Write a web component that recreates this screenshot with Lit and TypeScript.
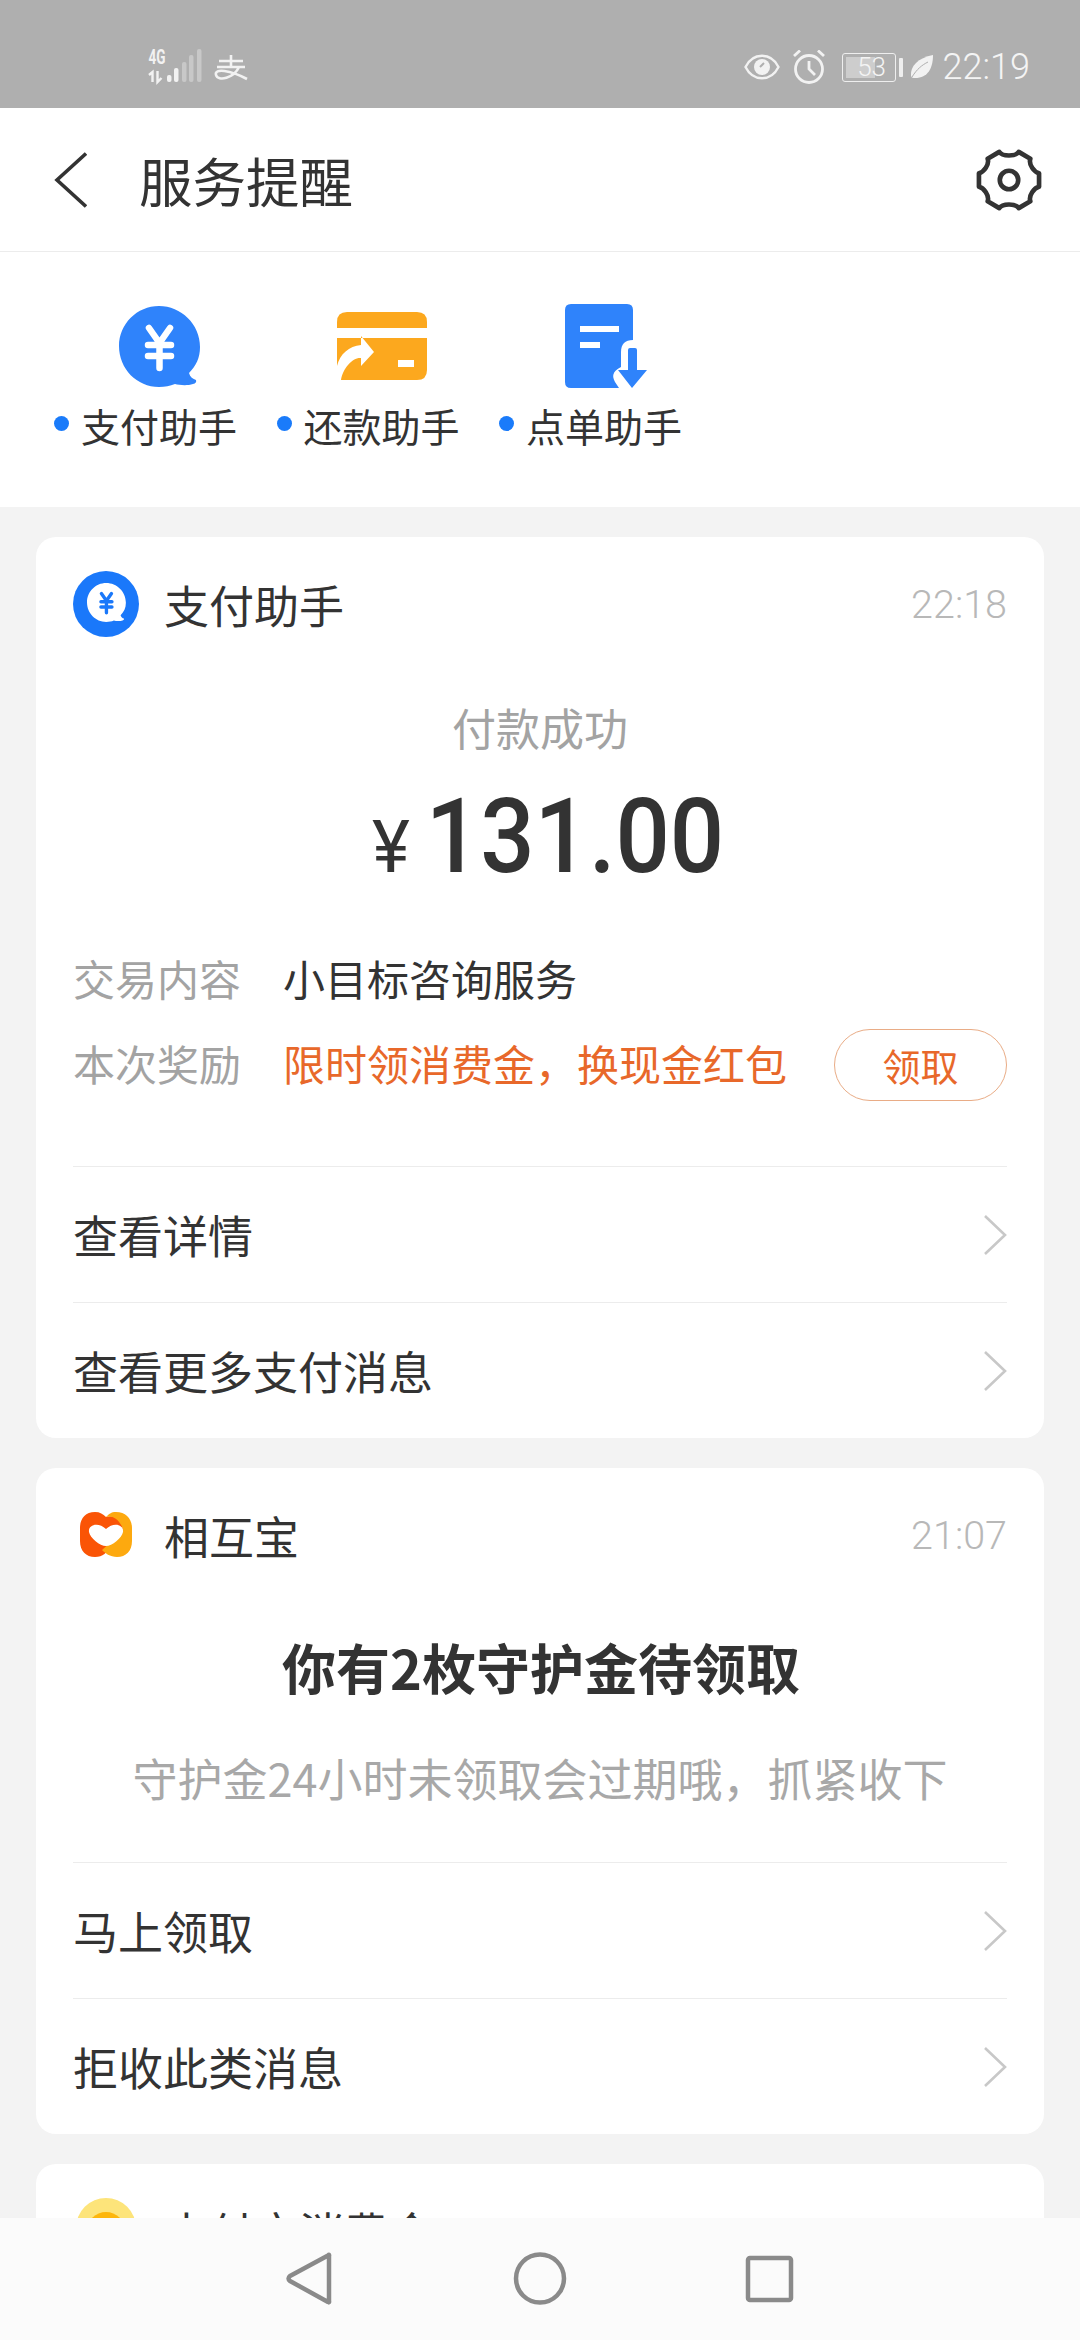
import { LitElement, html, css, svg } from "lit";
import { customElement } from "lit/decorators.js";

const chevron = html`<svg class="chev" viewBox="0 0 24 40" width="24" height="40"><path d="M2 1 L22 20 L2 39" fill="none" stroke="#c8c8c8" stroke-width="2.600"/></svg>`;

const yuanBubble = (bg: string, fg: string, sw: number) => svg`
  <path d="M40 0 C62 0 81 18 81 41 C81 52 77 60 70 67 C71 71 74 73 77 74 Q78 77 74 78 C68 80 60 79 56 78 C51 80 46 81 40 81 C18 81 0 63 0 40 C0 18 18 0 40 0Z" fill="${bg}"/>
  <path d="M30 22 L40.500 37 L51 22 M29 39 H52 M29 50 H52 M40.500 37 V62" fill="none" stroke="${fg}" stroke-width="${sw}" stroke-linecap="round" stroke-linejoin="round"/>`;

@customElement("app-root")
export class AppRoot extends LitElement {
  static styles = css`
    :host {
      display: block;
      width: 1080px;
      height: 2340px;
      overflow: hidden;
      position: relative;
      background: #f3f3f3;
      font-family: "Noto Sans CJK SC", "Noto Sans", sans-serif;
      color: #333;
    }
    .status {
      height: 108px;
      background: #afafaf;
      display: flex;
      align-items: flex-start;
      justify-content: space-between;
      padding: 0 50px 0 148px;
      box-sizing: border-box;
      color: #f2f2f2;
    }
    .status-left { display: flex; gap: 12px; margin-top: 49px; }
    .status-left svg { overflow: visible; }
    .status-left svg + svg { margin-top: 6px; }
    .status-right { display: flex; align-items: center; margin-top: 48px; height: 38px; }
    .alarm { margin-left: 12px; }
    .clock { font: 300 36px "Roboto", sans-serif; margin-left: 9px; color: #f4f4f4; }
    .batt {
      width: 54px; height: 29px; border: 1.5px solid #eee; border-radius: 3px; box-sizing: border-box;
      position: relative; font: 300 26px/26px "Roboto", sans-serif; text-align: center; color: #f4f4f4;
      margin-left: 16px;
    }
    .batt i { position: absolute; left: 3px; top: 3px; bottom: 3px; width: 29px; background: #cdcdcd; }
    .batt span { position: relative; left: 3px; }
    .nub { width: 4px; height: 19px; background: #eee; border-radius: 1px; margin: 0 7px 0 3px; }
    .head {
      height: 144px;
      background: #fff;
      border-bottom: 1px solid #ececec;
      box-sizing: border-box;
      display: flex;
      align-items: center;
      padding: 0 38px 0 54px;
    }
    .head .back { margin-right: 52px; }
    .head h1 { font-size: 53.500px; font-weight: 400; margin: 0; flex: 1; line-height: 1; color: #333; }
    .short {
      height: 255px;
      background: #fff;
      display: flex;
      padding: 52px 0 0 54px;
      box-sizing: border-box;
    }
    .sitem { width: 222.500px; display: flex; flex-direction: column; align-items: stretch; }
    .sicon { height: 84px; width: 210px; display: flex; justify-content: center; align-items: center; }
    .doc { margin-left: 4px; }
    .slabel { display: flex; align-items: center; margin-top: 11px; font-size: 39px; line-height: 52px; white-space: nowrap; }
    .dot { width: 15px; height: 15px; background: #1a7bfa; border-radius: 50%; margin-right: 12px; position: relative; top: -2px; flex: none; }
    .list { padding: 30px 36px 0; display: flex; flex-direction: column; gap: 30px; }
    .card { background: #fff; border-radius: 20px; padding: 0 37px; }
    .chead { display: flex; align-items: center; height: 134px; box-sizing: border-box; }
    .chead svg { flex: none; }
    .ctitle { font-size: 45px; flex: 1; margin-left: 25px; line-height: 1; white-space: nowrap; }
    .ctime { font: 300 39.500px "Roboto", sans-serif; color: #b8b8b8; }
    .sub { text-align: center; color: #a3a3a3; font-size: 44px; line-height: 60px; margin-top: 26px; }
    .amount {
      display: flex; justify-content: center; align-items: baseline; height: 118px;
      line-height: 118px; font-family: "Roboto", sans-serif; color: #333; margin-top: 21px;
    }
    .amount b { font-weight: 500; font-size: 104px; display: block; transform: scaleX(0.92); width: 294px; white-space: nowrap; text-align: center; margin-left: -6px; }
    .amount span { font-size: 72px; margin-right: 10px; font-weight: 400; }
    .kv { display: flex; align-items: center; font-size: 42px; height: 58px; }
    .kv.first { margin-top: 52px; }
    .kv.gap { margin-top: 20px; height: 72px; }
    .k { color: #a3a3a3; width: 210px; flex: none; }
    .v { flex: 1; white-space: nowrap; }
    .v.hot { color: #e8682a; }
    .btn {
      width: 173px; height: 72px; border: 1px solid #e9ac86; border-radius: 36px; box-sizing: border-box;
      color: #e8682a; font-size: 38px; display: flex; align-items: center; justify-content: center; margin-top: 5px;
    }
    .row { height: 136px; border-top: 1px solid #ececec; display: flex; align-items: center; justify-content: space-between; font-size: 45px; box-sizing: border-box; }
    .spacer-1 { height: 68px; }
    .big { text-align: center; font-size: 54px; font-weight: 700; line-height: 70px; margin-top: 30px; padding-left: 2px; color: #333; white-space: nowrap; }
    .note { text-align: center; color: #a8a8a8; font-size: 45px; line-height: 62px; margin-top: 45px; white-space: nowrap; }
    .spacer-2 { height: 53px; }
    .nav {
      position: absolute; left: 0; right: 0; bottom: 0; height: 122px; background: #fbfbfb;
    }
    .nav svg { display: block; }
  `;

  private gear() {
    return html`<svg width="66" height="64" viewBox="0 0 66 66">
      <path d="M23 4 C26 9 40 9 43 4 L55 11 C53 17 59 25 64 26 L64 40 C59 41 53 49 55 55 L43 62 C40 57 26 57 23 62 L11 55 C13 49 7 41 2 40 L2 26 C7 25 13 17 11 11 Z" fill="none" stroke="#333" stroke-width="4.800" stroke-linejoin="round"/>
      <circle cx="33" cy="33" r="9.500" fill="none" stroke="#333" stroke-width="4.800"/>
    </svg>`;
  }

  render() {
    return html`
      <div class="status">
        <div class="status-left">
          <svg width="54" height="34" viewBox="0 0 54 34">
            <text x="0.500" y="15" font-family="Roboto" font-size="20" font-weight="700" fill="#f2f2f2" textLength="17" lengthAdjust="spacingAndGlyphs">4G</text>
            <path d="M1 26 l3.500 -3 v10 M9.500 22 v11 l4 -4" fill="none" stroke="#f2f2f2" stroke-width="2.400"/>
            <rect x="19" y="26" width="4.500" height="7" rx="2" fill="#f2f2f2"/>
            <rect x="26" y="19" width="4.500" height="14" rx="2" fill="#f2f2f2"/>
            <rect x="34" y="13" width="4.500" height="20" rx="2" fill="#c8c8c8"/>
            <rect x="41" y="6" width="4.500" height="27" rx="2" fill="#c8c8c8"/>
            <rect x="49" y="0" width="4.500" height="33" rx="2" fill="#c8c8c8"/>
          </svg>
          <svg width="34" height="26" viewBox="0 0 34 26">
            <path d="M5 6 H29 M17 0 V12 M3 12 H31 M25 12 C20 23 4 27 2 20 C0 13 16 15 33 24" fill="none" stroke="#f2f2f2" stroke-width="2.600"/>
          </svg>
        </div>
        <div class="status-right">
          <svg width="36" height="28" viewBox="0 0 36 28">
            <path d="M1.500 14 C9 -1 27 -1 34.500 14 C27 29 9 29 1.500 14Z" fill="none" stroke="#f2f2f2" stroke-width="2.400"/>
            <circle cx="18" cy="14" r="8" fill="#f2f2f2"/>
            <path d="M16 14 L20 10" stroke="#afafaf" stroke-width="2"/>
          </svg>
          <svg class="alarm" width="34" height="34" viewBox="0 0 34 34">
            <circle cx="17" cy="19" r="13.500" fill="none" stroke="#f2f2f2" stroke-width="2.800"/>
            <path d="M17 11 V19 L23 25" fill="none" stroke="#f2f2f2" stroke-width="2.800" />
            <path d="M2 6 L8 0.500 M26 0.500 L32 6" stroke="#f2f2f2" stroke-width="2.800"/>
          </svg>
          <div class="batt"><i></i><span>53</span></div>
          <div class="nub"></div>
          <svg width="24" height="26" viewBox="0 0 24 26">
            <path d="M23 1 C23 14 18 24 5 24 C3 24 2 24 1 22 C0 12 8 4 23 1Z" fill="#f2f2f2"/>
            <path d="M2 23 C7 15 12 11 18 8" stroke="#afafaf" stroke-width="1" fill="none"/>
          </svg>
          <div class="clock">22:19</div>
        </div>
      </div>
      <div class="head">
        <svg class="back" width="33" height="56" viewBox="0 0 33 56"><path d="M32 1.500 L3 28 L32 54.500" fill="none" stroke="#333" stroke-width="3.600"/></svg>
        <h1>服务提醒</h1>
        ${this.gear()}
      </div>
      <div class="short">
        <div class="sitem">
          <div class="sicon"><svg width="81" height="81" viewBox="0 0 81 81">${yuanBubble("#2f83fb", "#fff", 6.500)}</svg></div>
          <div class="slabel"><span class="dot"></span>支付助手</div>
        </div>
        <div class="sitem">
          <div class="sicon"><svg width="90" height="68" viewBox="0 0 90 68">
            <path d="M10 0 H80 Q90 0 90 10 V16 H0 V10 Q0 0 10 0Z" fill="#fca81e"/>
            <path d="M0 26 H90 V58 Q90 68 80 68 H4 C6 56 16 45 24 46 V54 L37 40 L24 24 V33 C12 34 3 42 0 54Z" fill="#fca81e"/>
            <rect x="61" y="48" width="16" height="7" fill="#fff"/>
          </svg></div>
          <div class="slabel"><span class="dot"></span>还款助手</div>
        </div>
        <div class="sitem">
          <div class="sicon"><svg class="doc" width="82" height="84" viewBox="0 0 82 84">
            <path d="M6 0 H62 Q68 0 68 6 V36 C60 36 56 40 56 48 V63 C47 68 47 72 50 78 L54 84 H6 Q0 84 0 78 V6 Q0 0 6 0Z" fill="#2f83fb"/>
            <rect x="15" y="22" width="39" height="6" fill="#fff"/>
            <rect x="15" y="38" width="20" height="6" fill="#fff"/>
            <path d="M63 46 Q63 44 65 44 H70 Q72 44 72 46 V66 H82 L67 84 L53 66 H63Z" fill="#2f83fb"/>
          </svg></div>
          <div class="slabel"><span class="dot"></span>点单助手</div>
        </div>
      </div>
      <div class="list">
        <div class="card">
          <div class="chead">
            <svg width="66" height="66" viewBox="0 0 66 66">
              <circle cx="33" cy="33" r="33" fill="#1a78fa"/>
              <g transform="translate(14 12) scale(0.48)">${yuanBubble("#fff", "#1a78fa", 7)}</g>
            </svg>
            <div class="ctitle">支付助手</div>
            <div class="ctime">22:18</div>
          </div>
          <div class="sub">付款成功</div>
          <div class="amount"><span>¥</span><b>131.00</b></div>
          <div class="kv first"><div class="k">交易内容</div><div class="v">小目标咨询服务</div></div>
          <div class="kv gap"><div class="k">本次奖励</div><div class="v hot">限时领消费金，换现金红包</div><div class="btn">领取</div></div>
          <div class="spacer-1"></div>
          <div class="row">查看详情 ${chevron}</div>
          <div class="row">查看更多支付消息 ${chevron}</div>
        </div>
        <div class="card">
          <div class="chead">
            <svg width="66" height="66" viewBox="0 0 66 66">
              <path d="M22 10 C12 10 7 17 7 26 V39 C7 49 13 55 22 55 C30 55 34 50 38 45 L50 27 C48 17 41 12 33 15 C30 12 27 10 22 10Z" fill="#fa5406"/>
              <path d="M43 10 C53 10 59 17 59 26 V39 C59 49 53 55 44 55 C37 55 32 51 29 48 L40 38 L50 27 C46 16 38 13 33 15 C36 12 38 10 43 10Z" fill="#fda90f"/>
              <path d="M33 27 C26 20 15 22 16 30 C17 36 27 44 33 44 C39 44 49 36 50 30 C51 22 40 20 33 27Z" fill="#fff"/>
            </svg>
            <div class="ctitle">相互宝</div>
            <div class="ctime">21:07</div>
          </div>
          <div class="big">你有2枚守护金待领取</div>
          <div class="note">守护金24小时未领取会过期哦，抓紧收下</div>
          <div class="spacer-2"></div>
          <div class="row">马上领取 ${chevron}</div>
          <div class="row">拒收此类消息 ${chevron}</div>
        </div>
        <div class="card">
          <div class="chead">
            <svg width="66" height="66" viewBox="0 0 66 66">
              <circle cx="33" cy="30" r="30" fill="#fde47a"/>
              <circle cx="33" cy="33" r="19" fill="#fdb60c"/>
            </svg>
            <div class="ctitle">支付宝消费金</div>
          </div>
        </div>
      </div>
      <div class="nav">
        <svg width="1080" height="122" viewBox="0 0 1080 122">
          <path d="M329 38 Q329.500 36 328 37.500 L290 58 Q287 60.500 290 63 L328 84 Q329.500 85 329 83Z" fill="none" stroke="#8a8a8a" stroke-width="4.500" stroke-linejoin="round"/>
          <circle cx="540" cy="60.500" r="24" fill="none" stroke="#8a8a8a" stroke-width="4.500"/>
          <rect x="748" y="40" width="43" height="42" rx="2" fill="none" stroke="#8a8a8a" stroke-width="4.500"/>
        </svg>
      </div>
    `;
  }
}
